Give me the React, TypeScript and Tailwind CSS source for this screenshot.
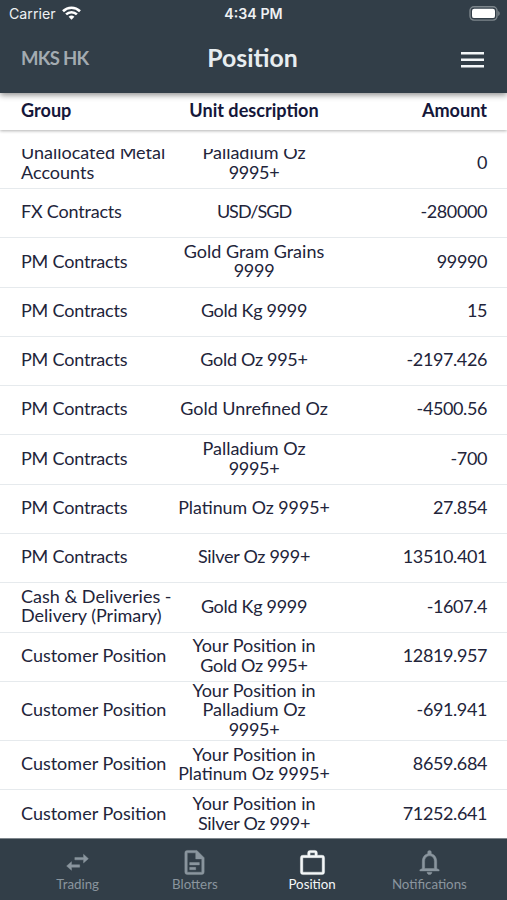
import React, { FC } from 'react';
import classNames from 'clsx';

interface IRow {
  group: string;
  unit: string[];
  amount: string;
  tall?: boolean;
}

interface ITab {
  label: string;
  path: string;
  active?: boolean;
}

const rows: IRow[] = [
  { group: 'Unallocated Metal Accounts', unit: ['Palladium Oz', '9995+'], amount: '0' },
  { group: 'FX Contracts', unit: ['USD/SGD'], amount: '-280000' },
  { group: 'PM Contracts', unit: ['Gold Gram Grains', '9999'], amount: '99990' },
  { group: 'PM Contracts', unit: ['Gold Kg 9999'], amount: '15' },
  { group: 'PM Contracts', unit: ['Gold Oz 995+'], amount: '-2197.426' },
  { group: 'PM Contracts', unit: ['Gold Unrefined Oz'], amount: '-4500.56' },
  { group: 'PM Contracts', unit: ['Palladium Oz', '9995+'], amount: '-700' },
  { group: 'PM Contracts', unit: ['Platinum Oz 9995+'], amount: '27.854' },
  { group: 'PM Contracts', unit: ['Silver Oz 999+'], amount: '13510.401' },
  { group: 'Cash & Deliveries - Delivery (Primary)', unit: ['Gold Kg 9999'], amount: '-1607.4' },
  { group: 'Customer Position', unit: ['Your Position in', 'Gold Oz 995+'], amount: '12819.957' },
  {
    group: 'Customer Position',
    unit: ['Your Position in', 'Palladium Oz', '9995+'],
    amount: '-691.941',
    tall: true,
  },
  { group: 'Customer Position', unit: ['Your Position in', 'Platinum Oz 9995+'], amount: '8659.684' },
  { group: 'Customer Position', unit: ['Your Position in', 'Silver Oz 999+'], amount: '71252.641' },
];

const tabs: ITab[] = [
  {
    label: 'Trading',
    path: 'M21 8.8l-4-3.6v2.6H9.8v2H17v2.6zM7 11.3l-4 3.6 4 3.6v-2.6h6.8v-2H7z',
  },
  {
    label: 'Blotters',
    path: 'M6 2a2 2 0 0 0-2 2v16a2 2 0 0 0 2 2h12a2 2 0 0 0 2-2V8l-6-6H6zm0 2h7v5h5v11H6V4zm2 8v2h8v-2H8zm0 4v2h5v-2H8z',
  },
  {
    label: 'Position',
    path: 'M10 2a2 2 0 0 0-2 2v2H4a2 2 0 0 0-2 2v12a2 2 0 0 0 2 2h16a2 2 0 0 0 2-2V8a2 2 0 0 0-2-2h-4V4a2 2 0 0 0-2-2h-4zm0 2h4v2h-4V4zM4 8h16v12H4V8z',
    active: true,
  },
  {
    label: 'Notifications',
    path: 'M12 22c1.1 0 2-.9 2-2h-4c0 1.1.9 2 2 2zm6-5v-6c0-3.07-1.63-5.64-4.5-6.32V3.5c0-.83-.67-1.5-1.5-1.5s-1.5.67-1.5 1.5v1.18C7.64 5.36 6 7.92 6 11v6l-2 1v1h16v-1l-2-1zm-2 0H8v-6c0-2.48 1.51-4.5 4-4.5s4 2.02 4 4.5v6z',
  },
];

const StatusBar: FC = () => (
  <div className="grid h-[27px] grid-cols-3 items-center px-[9px] font-['Inter',sans-serif] text-[14.2px] text-[#eef1f3]">
    <div className="flex items-center gap-[6px]">
      <span className="font-normal">Carrier</span>
      <svg width="19" height="14" viewBox="0 0 19 14" fill="none" stroke="#fff" strokeWidth="2.6">
        <path d="M1 5.2a12.2 12.2 0 0 1 17 0" />
        <path d="M4.1 8.4a7.7 7.7 0 0 1 10.8 0" />
        <path d="M9.5 13.8L6.6 10.8a4.2 4.2 0 0 1 5.8 0z" fill="#fff" stroke="none" />
      </svg>
    </div>
    <span className="text-center font-semibold">4:34 PM</span>
    <svg className="-mr-[2px] justify-self-end" width="31" height="15" viewBox="0 0 31 15">
      <rect x="1" y=".7" width="27" height="13.4" rx="4" fill="none" stroke="#7d868c" strokeWidth="1.4" />
      <rect x="3" y="2.7" width="23" height="9.4" rx="2.2" fill="#fff" />
      <path d="M29.2 5v5c2-1 2-4 0-5z" fill="#7d868c" />
    </svg>
  </div>
);

const unitTracking = (line: string) => {
  if (line.startsWith('Platinum')) return 'text-[17.8px]';
  if (/\d/.test(line)) return 'tracking-[-0.3px]';
  return line === line.toUpperCase() && 'tracking-[-1px]';
};

const Row: FC<IRow> = ({ group, unit, amount, tall }) => (
  <div
    className={classNames(
      'flex shrink-0 items-center border-b border-[#e6eaed] pr-5 pb-[2.2px] pl-[21px]',
      tall ? 'h-[59.2px]' : 'h-[49.3px]',
    )}
  >
    <div className={classNames('w-[155px]', group.endsWith('Contracts') && 'tracking-[-0.2px]')}>
      {group}
    </div>
    <div className="w-[156px] text-center">
      {unit.map((line) => (
        <div key={line} className={classNames('whitespace-nowrap', unitTracking(line))}>
          {line}
        </div>
      ))}
    </div>
    <div className="flex-1 text-right tracking-[-0.4px]">{amount}</div>
  </div>
);

const TabItem: FC<ITab> = ({ label, path, active }) => (
  <div
    className={classNames(
      'flex flex-1 flex-col items-center pt-[9px] text-[13.3px] leading-4',
      active ? 'text-[#f4f7f8]' : 'text-[#8a959e]',
    )}
  >
    <svg
      className="-mb-px"
      width="29"
      height="29"
      viewBox="0 0 24 24"
      fill="currentColor"
      stroke="currentColor"
      strokeWidth=".35"
    >
      <path d={path} />
    </svg>
    <span>{label}</span>
  </div>
);

const App: FC = () => {
  return (
    <div className="flex h-[900px] w-[507px] flex-col overflow-hidden bg-white font-['Lato','Liberation_Sans',sans-serif] text-[#22243a]">
      <header className="relative z-20 h-[93px] shrink-0 bg-[#323e48] shadow-[0_2px_6px_rgba(0,0,0,0.45)]">
        <StatusBar />
        <div className="grid grid-cols-3 items-center pt-[15px] pr-[23px] pl-[21px]">
          <span className="pt-px text-[18.5px] font-bold tracking-[-0.7px] text-[#a3abb1]">MKS HK</span>
          <span className="text-center text-[24.8px] leading-8 font-bold text-[#e8edf0]">Position</span>
          <svg className="mt-[3px] justify-self-end" width="23" height="16" viewBox="0 0 23 16" fill="#f3f6f8">
            <path d="M0 0h23v2.5H0zM0 6.5h23V9H0zM0 13h23v2.5H0z" />
          </svg>
        </div>
      </header>
      <div className="relative z-10 flex h-[37px] shrink-0 items-center pr-5 pb-[2px] pl-[21px] text-[18.1px] font-bold text-[#15173a] shadow-[0_1px_3px_rgba(0,0,0,0.3)]">
        <span className="w-[155px]">Group</span>
        <span className="w-[156px] text-center">Unit description</span>
        <span className="flex-1 text-right">Amount</span>
      </div>
      <main className="mt-[19px] h-[689.4px] shrink-0 overflow-hidden text-[18px] leading-[19.6px]">
        <div className="-mt-[9.3px] flex flex-col">
          {rows.map((row, i) => (
            <Row key={i} {...row} />
          ))}
        </div>
      </main>
      <nav className="flex flex-1 border-t border-[#7e868c] bg-[#323e48] px-[19px]">
        {tabs.map((tab) => (
          <TabItem key={tab.label} {...tab} />
        ))}
      </nav>
    </div>
  );
};

export default App;
